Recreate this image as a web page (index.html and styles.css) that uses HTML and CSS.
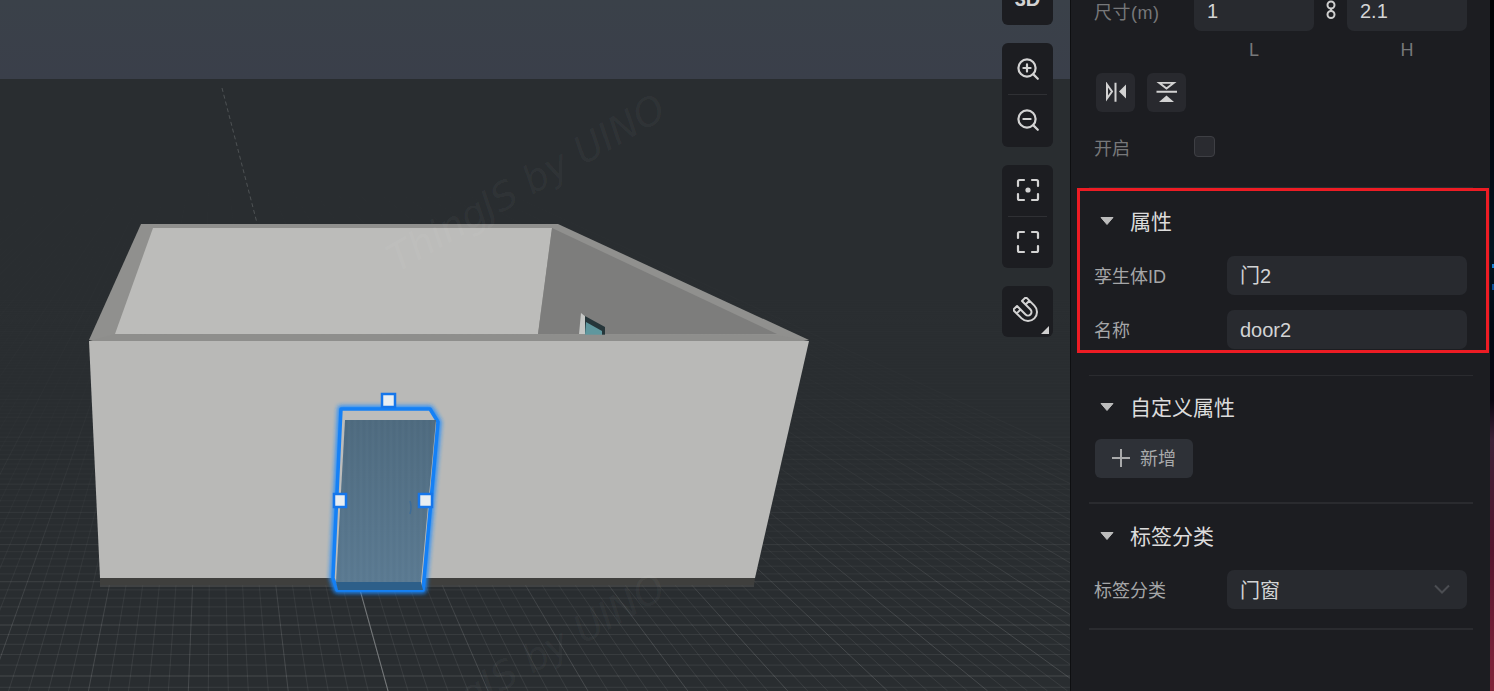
FILE: index.html
```html
<!DOCTYPE html>
<html lang="zh">
<head>
<meta charset="utf-8">
<title>ThingJS</title>
<link rel="stylesheet" href="styles.css">
</head>
<body>
<div class="app">
  <main class="stage">
    <div class="stage-sky"></div>
    <svg class="scene" viewBox="0 0 1070 691" width="1070" height="691">
      <defs>
        <linearGradient id="gridFade" gradientUnits="userSpaceOnUse" x1="0" y1="150" x2="0" y2="640">
          <stop offset="0" stop-color="#fff" stop-opacity="0"/>
          <stop offset="0.5" stop-color="#fff" stop-opacity="0.014"/>
          <stop offset="0.75" stop-color="#fff" stop-opacity="0.05"/>
          <stop offset="1" stop-color="#fff" stop-opacity="0.13"/>
        </linearGradient>
        <linearGradient id="doorFace" x1="0" y1="0" x2="0" y2="1">
          <stop offset="0" stop-color="#4f6b80"/>
          <stop offset="1" stop-color="#5b7a92"/>
        </linearGradient>
        <pattern id="doorGrain" patternUnits="userSpaceOnUse" width="6" height="6">
          <rect x="0" y="0" width="2" height="6" fill="#fff" fill-opacity="0.012"/>
          <rect x="3" y="0" width="2" height="6" fill="#000" fill-opacity="0.012"/>
        </pattern>
        <filter id="glow" x="-20%" y="-20%" width="140%" height="140%">
          <feGaussianBlur stdDeviation="2.200"/>
        </filter>
      </defs>
      <g id="grid" fill="none"></g>
      <path class="axis-far" d="M222 88L257 223"/>
      <path class="axis-near" d="M360 590L388 691"/>

      <g class="soft">
        <polygon class="base" points="100,578 755,578 754,585 100,585"/>
        <line class="base-line" x1="100" y1="586" x2="754" y2="586"/>
        <polygon class="cap" points="141,224 558,224 809,340 89,340"/>
        <polygon class="wall-back" points="153,228 552,228 538,334 115,334"/>
        <polygon class="wall-side" points="552,228 777,334 538,334"/>
        <polygon class="win-frame" points="581,313 586,317 585,334 579,334"/>
        <polygon class="win-dark" points="585,316 605,327 605,335 585,335"/>
        <polygon class="win-glass" points="586,322 602,331 602,335 585,335"/>
        <polygon class="cap-front" points="115,334 777,335 809,341 89,341"/>
        <polygon class="wall-front" points="89,341 809,341 755,578 100,578"/>
      </g>

      <text class="mark" transform="translate(397 273) rotate(-30)">ThingJS by UINO</text>
      <text class="mark" transform="translate(397 752) rotate(-30)">ThingJS by UINO</text>

      <polygon class="door-halo" points="341,409 430,409 438,422 423,590 337,590 333,578"/>
      <polygon class="door-line" points="341,409 430,409 438,422 423,590 337,590 333,578"/>
      <polygon class="door-face" points="345,420 436,420 421,582 336,582"/>
      <polygon class="door-grain" points="345,420 436,420 421,582 336,582"/>
      <polygon class="door-foot" points="336,582 421,582 423,590 338,590"/>
      <path class="door-handle" d="M410 501q2 6 0 13"/>
      <rect class="grip" x="382" y="394" width="13" height="13"/>
      <rect class="grip" x="334" y="494" width="12" height="13"/>
      <rect class="grip" x="419" y="494" width="13" height="13"/>
    </svg>

    <div class="tools">
      <div class="tool-group">
        <button class="tool tool-text">3D</button>
      </div>
      <div class="tool-group">
        <button class="tool">
          <svg viewBox="0 0 24 24" width="24" height="24"><circle cx="11" cy="11" r="8.600"/><path d="M11 7.400v7.200M7.400 11h7.200M17.400 17.400l4.400 4.400"/></svg>
        </button>
        <button class="tool">
          <svg viewBox="0 0 24 24" width="24" height="24"><circle cx="11" cy="11" r="8.600"/><path d="M7.400 11h7.200M17.400 17.400l4.400 4.400"/></svg>
        </button>
      </div>
      <div class="tool-group">
        <button class="tool">
          <svg viewBox="0 0 24 24" width="24" height="24"><path d="M2 8V3.500A1.500 1.500 0 0 1 3.500 2H8M16 2h4.500A1.500 1.500 0 0 1 22 3.500V8M22 16v4.500a1.500 1.500 0 0 1-1.500 1.500H16M8 22H3.500A1.500 1.500 0 0 1 2 20.500V16"/><circle class="solid" cx="12" cy="12" r="2.600"/></svg>
        </button>
        <button class="tool">
          <svg viewBox="0 0 24 24" width="24" height="24"><path d="M2 8V3.500A1.500 1.500 0 0 1 3.500 2H8M16 2h4.500A1.500 1.500 0 0 1 22 3.500V8M22 16v4.500a1.500 1.500 0 0 1-1.500 1.500H16M8 22H3.500A1.500 1.500 0 0 1 2 20.500V16"/></svg>
        </button>
      </div>
      <div class="tool-group">
        <button class="tool tool-snap">
          <svg viewBox="0 0 30 30" width="30" height="30"><path transform="rotate(-45 15 15)" d="M6 3H11.500V15a3.500 3.500 0 0 0 7 0V3H24V15a9 9 0 0 1-18 0ZM6 8H11.500M18.500 8H24"/></svg>
          <span class="corner"></span>
        </button>
      </div>
    </div>
  </main>

  <aside class="panel">
    <div class="panel-body">
      <section class="sec sec-geom">
        <div class="size-row">
          <span class="label label-dim">尺寸(m)</span>
          <div class="field field-small">1</div>
          <svg class="chain" viewBox="0 0 12 20" width="12" height="20"><circle cx="6" cy="5" r="3.500"/><circle cx="6" cy="14.500" r="3.500"/><path d="M6 8v3.500"/></svg>
          <div class="field field-small">2.1</div>
        </div>
        <div class="axis-row">
          <span>L</span>
          <span>H</span>
        </div>
        <div class="flip-row">
          <button class="flip">
            <svg viewBox="0 0 22 22" width="22" height="22"><path d="M10.500 .700V19.700M2 2.500L7 9.500L2 16.500Z"/><path class="solid" d="M21 2.500L14 9.500L21 16.500Z"/></svg>
          </button>
          <button class="flip">
            <svg viewBox="0 0 22 22" width="22" height="22"><path d="M.500 9.700H21M3 .700H18L10.500 6.500Z"/><path class="solid" d="M10.500 13.500L18 20H3Z"/></svg>
          </button>
        </div>
        <div class="check-row">
          <span class="label label-dim">开启</span>
          <span class="check"></span>
        </div>
      </section>

      <section class="sec sec-attrs">
        <h3 class="sec-head"><svg class="caret" viewBox="0 0 16 10" width="16" height="10"><path d="M2 1.500H14L8 8.500Z"/></svg>属性</h3>
        <div class="form-row">
          <span class="label">孪生体ID</span>
          <div class="field">门2</div>
        </div>
        <div class="form-row">
          <span class="label">名称</span>
          <div class="field">door2</div>
        </div>
      </section>

      <section class="sec sec-custom">
        <h3 class="sec-head"><svg class="caret" viewBox="0 0 16 10" width="16" height="10"><path d="M2 1.500H14L8 8.500Z"/></svg>自定义属性</h3>
        <button class="add">
          <svg viewBox="0 0 20 20" width="20" height="20"><path d="M10 1v18M1 10h18"/></svg>
          <span>新增</span>
        </button>
      </section>

      <section class="sec sec-tags">
        <h3 class="sec-head"><svg class="caret" viewBox="0 0 16 10" width="16" height="10"><path d="M2 1.500H14L8 8.500Z"/></svg>标签分类</h3>
        <div class="form-row">
          <span class="label">标签分类</span>
          <div class="field field-select">
            <span class="select-value">门窗</span>
            <svg viewBox="0 0 16 10" width="16" height="10"><path d="M1 1.500l7 7 7-7"/></svg>
          </div>
        </div>
      </section>
    </div>
    <div class="annotation"></div>
  </aside>
  <div class="backdrop"><i class="dot dot-a"></i><i class="dot dot-b"></i></div>
</div>
<script src="grid.js"></script>
</body>
</html>
```

FILE: styles.css
```css
* { box-sizing: border-box; }
html, body { margin: 0; height: 100%; overflow: hidden; background: #1c1d21; }
body { font-family: "Liberation Sans", "Noto Sans CJK SC", sans-serif; }
button { font: inherit; border: 0; padding: 0; background: none; color: inherit; }

.app { display: flex; width: 1494px; height: 691px; overflow: hidden; }

/* viewport */
.stage { position: relative; flex: 0 0 1070px; height: 691px; overflow: hidden; background: #292d30; }
.stage-sky { height: 79px; background: linear-gradient(#3a4149, #3a3f4a); }
.scene { position: absolute; left: 0; top: 0; display: block; }

.grid-minor { stroke: url(#gridFade); stroke-width: 1; opacity: .55; }
.grid-major { stroke: url(#gridFade); stroke-width: 1; }
.axis-far { stroke: #4e5254; stroke-width: 1; fill: none; stroke-dasharray: 4 3; }
.axis-near { stroke: #75787a; stroke-width: 1; fill: none; }
.soft { filter: blur(.4px); }

.base { fill: #3f3f3d; }
.base-line { stroke: #565654; stroke-width: 1; }
.cap { fill: #90908e; }
.wall-back { fill: #bcbcba; }
.wall-side { fill: #7d7d7c; }
.win-frame { fill: #c4c6c4; }
.win-dark { fill: #26363a; }
.win-glass { fill: #5f979e; }
.cap-front { fill: #8e8e8c; }
.wall-front { fill: #b9b9b7; }
.mark { font-family: "DejaVu Sans", sans-serif; font-style: italic; font-size: 38.5px; fill: #fff; fill-opacity: .045; }

.door-halo { fill: none; stroke: #1f8bff; stroke-width: 7; stroke-linejoin: round; filter: url(#glow); opacity: .95; }
.door-line { fill: #bdbdbb; stroke: #1580f5; stroke-width: 3.5; stroke-linejoin: round; }
.door-face { fill: url(#doorFace); }
.door-grain { fill: url(#doorGrain); }
.door-foot { fill: #2d5f89; }
.door-handle { fill: none; stroke: #3f6c96; stroke-width: 1.500; }
.grip { fill: #e9eef2; stroke: #1676ea; stroke-width: 2.500; }

/* viewport tool column */
.tools { position: absolute; left: 1002px; top: -26px; display: flex; flex-direction: column; gap: 18px; width: 51px; }
.tool-group { background: #1c1d21; border-radius: 6px; display: flex; flex-direction: column; }
.tool { position: relative; height: 51px; display: flex; align-items: center; justify-content: center; color: #d3d3d3; }
.tool + .tool { height: 52.500px; }
.tool + .tool::before { content: ""; position: absolute; left: 6px; right: 6px; top: 0; height: 1px; background: #2f3034; }
.tool svg { fill: none; stroke: currentColor; stroke-width: 2.200; stroke-linecap: round; stroke-linejoin: round; }
.tool svg .solid { fill: currentColor; stroke: none; }
.tool-text { font-size: 20px; font-weight: 700; }
.tool-snap svg { stroke-width: 2; }
.corner { position: absolute; right: 4px; bottom: 3px; width: 0; height: 0; border-style: solid; border-width: 0 0 8px 8px; border-color: transparent transparent #cfcfcf transparent; }

/* property panel */
.panel { position: relative; flex: 0 0 420px; height: 691px; background: #1c1d21; border-left: 1px solid #0e0f11; overflow: hidden; }
.panel-body { margin-top: -8px; padding: 0 17px 0 18px; }
.sec { border-bottom: 1px solid #2a2b2f; }
.sec-geom { padding-left: 5px; padding-right: 6px; padding-bottom: 30px; }
.sec-attrs { padding-bottom: 26px; }
.sec-custom { border-bottom: 2px solid #2a2b2f; padding-bottom: 24px; }
.sec-tags { border-bottom: 2px solid #2a2b2f; padding-bottom: 19px; }

.size-row { display: flex; align-items: center; height: 39px; }
.label { color: #a5a6a8; font-size: 18px; line-height: 26px; padding-top: 2px; }
.label-dim { color: #77787a; }
.size-row .label { flex: 0 0 100px; letter-spacing: .5px; }
.field { background: #282a2f; border-radius: 7px; height: 39px; color: #d3d4d5; font-size: 20px; line-height: 41px; padding-left: 13px; }
.field-small { flex: 0 0 120px; line-height: 39px; }
.chain { flex: 0 0 12px; margin: 0 10px 0 11px; fill: none; stroke: #cfcfcf; stroke-width: 2; position: relative; top: -2px; }
.axis-row { display: flex; height: 36px; padding-left: 100px; color: #77787a; font-size: 18px; line-height: 38px; }
.axis-row span { flex: 0 0 120px; text-align: center; }
.axis-row span + span { margin-left: 33px; }
.flip-row { display: flex; gap: 12px; margin-top: 6px; padding-left: 2px; }
.flip { width: 39px; height: 39px; background: #28292e; border-radius: 6px; display: flex; align-items: center; justify-content: center; }
.flip svg { fill: none; stroke: #d2d2d2; stroke-width: 2; }
.flip svg .solid { fill: #d2d2d2; stroke: none; }
.check-row { display: flex; align-items: center; height: 21px; margin-top: 24px; }
.check-row .label { flex: 0 0 100px; padding-top: 4px; }
.check { width: 21px; height: 21px; background: #2a2b30; border: 1px solid #3e3f44; border-radius: 4px; }

.sec-head { display: flex; align-items: center; height: 38px; margin: 0; padding: 0 0 4px 10px; color: #dcdcdc; font-size: 21px; font-weight: 400; }
.sec-attrs .sec-head { margin-top: 15px; }
.sec-custom .sec-head { margin-top: 13px; }
.sec-tags .sec-head { margin-top: 14px; height: 37px; }
.caret { flex: 0 0 16px; margin-right: 15px; fill: #bcbcbc; stroke: #bcbcbc; stroke-width: 1; stroke-linejoin: round; position: relative; top: 1px; }

.form-row { display: flex; align-items: center; margin-top: 15px; padding-left: 5px; padding-right: 6px; }
.form-row .label { flex: 0 0 133px; }
.form-row .field { flex: 1; }
.field-select { display: flex; align-items: center; justify-content: space-between; padding-right: 17px; }
.select-value { line-height: 26px; padding-top: 2px; }
.field-select svg { fill: none; stroke: #4b4d52; stroke-width: 2; position: relative; top: -1px; }

.add { display: flex; align-items: center; gap: 9px; width: 98px; height: 39px; margin: 12px 0 0 6px; padding-left: 16px; background: #2e3137; border-radius: 6px; color: #a9aaab; font-size: 18px; }
.add span { line-height: 26px; }
.add svg { fill: none; stroke: #a9aaab; stroke-width: 2; position: relative; top: -1px; }

.annotation { position: absolute; left: 6px; top: 188px; width: 412px; height: 165px; border: 3px solid #ed1c24; pointer-events: none; }

/* desktop peeking out to the right */
.backdrop { position: relative; flex: 0 0 4px; height: 691px; background: linear-gradient(#010203 0, #030a14 170px, #031420 250px, #020812 330px, #0a0510 400px, #3c2036 440px, #52142c 550px, #7a2038 660px, #802238 691px); }
.dot { position: absolute; left: 2px; width: 2px; background: #1583d8; }
.dot-a { top: 264px; height: 4px; }
.dot-b { top: 284px; height: 6px; background: #0b4f9a; }
```

FILE: grid.js
```js
// Perspective floor grid: all depth lines run to one vanishing point.
(function () {
  var vx = 214, vy = 58, axisX = 370, refY = 625, cell = 89.5;
  var bottom = 691, top = 150;
  var major = '', minor = '';

  for (var i = -60; i <= 60; i++) {
    var x = axisX + (i / 5) * cell;
    var t = (bottom - vy) / (refY - vy);
    var x2 = vx + (x - vx) * t;
    var t1 = (top - vy) / (refY - vy);
    var x1 = vx + (x - vx) * t1;
    var seg = 'M' + x1.toFixed(1) + ' ' + top + 'L' + x2.toFixed(1) + ' ' + bottom;
    if (i % 5 === 0) { major += seg; } else { minor += seg; }
  }

  var base = 1 / (676 - vy), step = 0.0001456 / 5;
  for (var n = -5; n < 240; n++) {
    var y = vy + 1 / (base + n * step);
    if (y > bottom || y < 300) { continue; }
    var row = 'M0 ' + y.toFixed(1) + 'H1070';
    if (n % 5 === 0) { major += row; } else { minor += row; }
  }

  var g = document.getElementById('grid');
  [['grid-minor', minor], ['grid-major', major]].forEach(function (p) {
    var el = document.createElementNS('http://www.w3.org/2000/svg', 'path');
    el.setAttribute('class', p[0]);
    el.setAttribute('d', p[1]);
    g.appendChild(el);
  });
})();
```
